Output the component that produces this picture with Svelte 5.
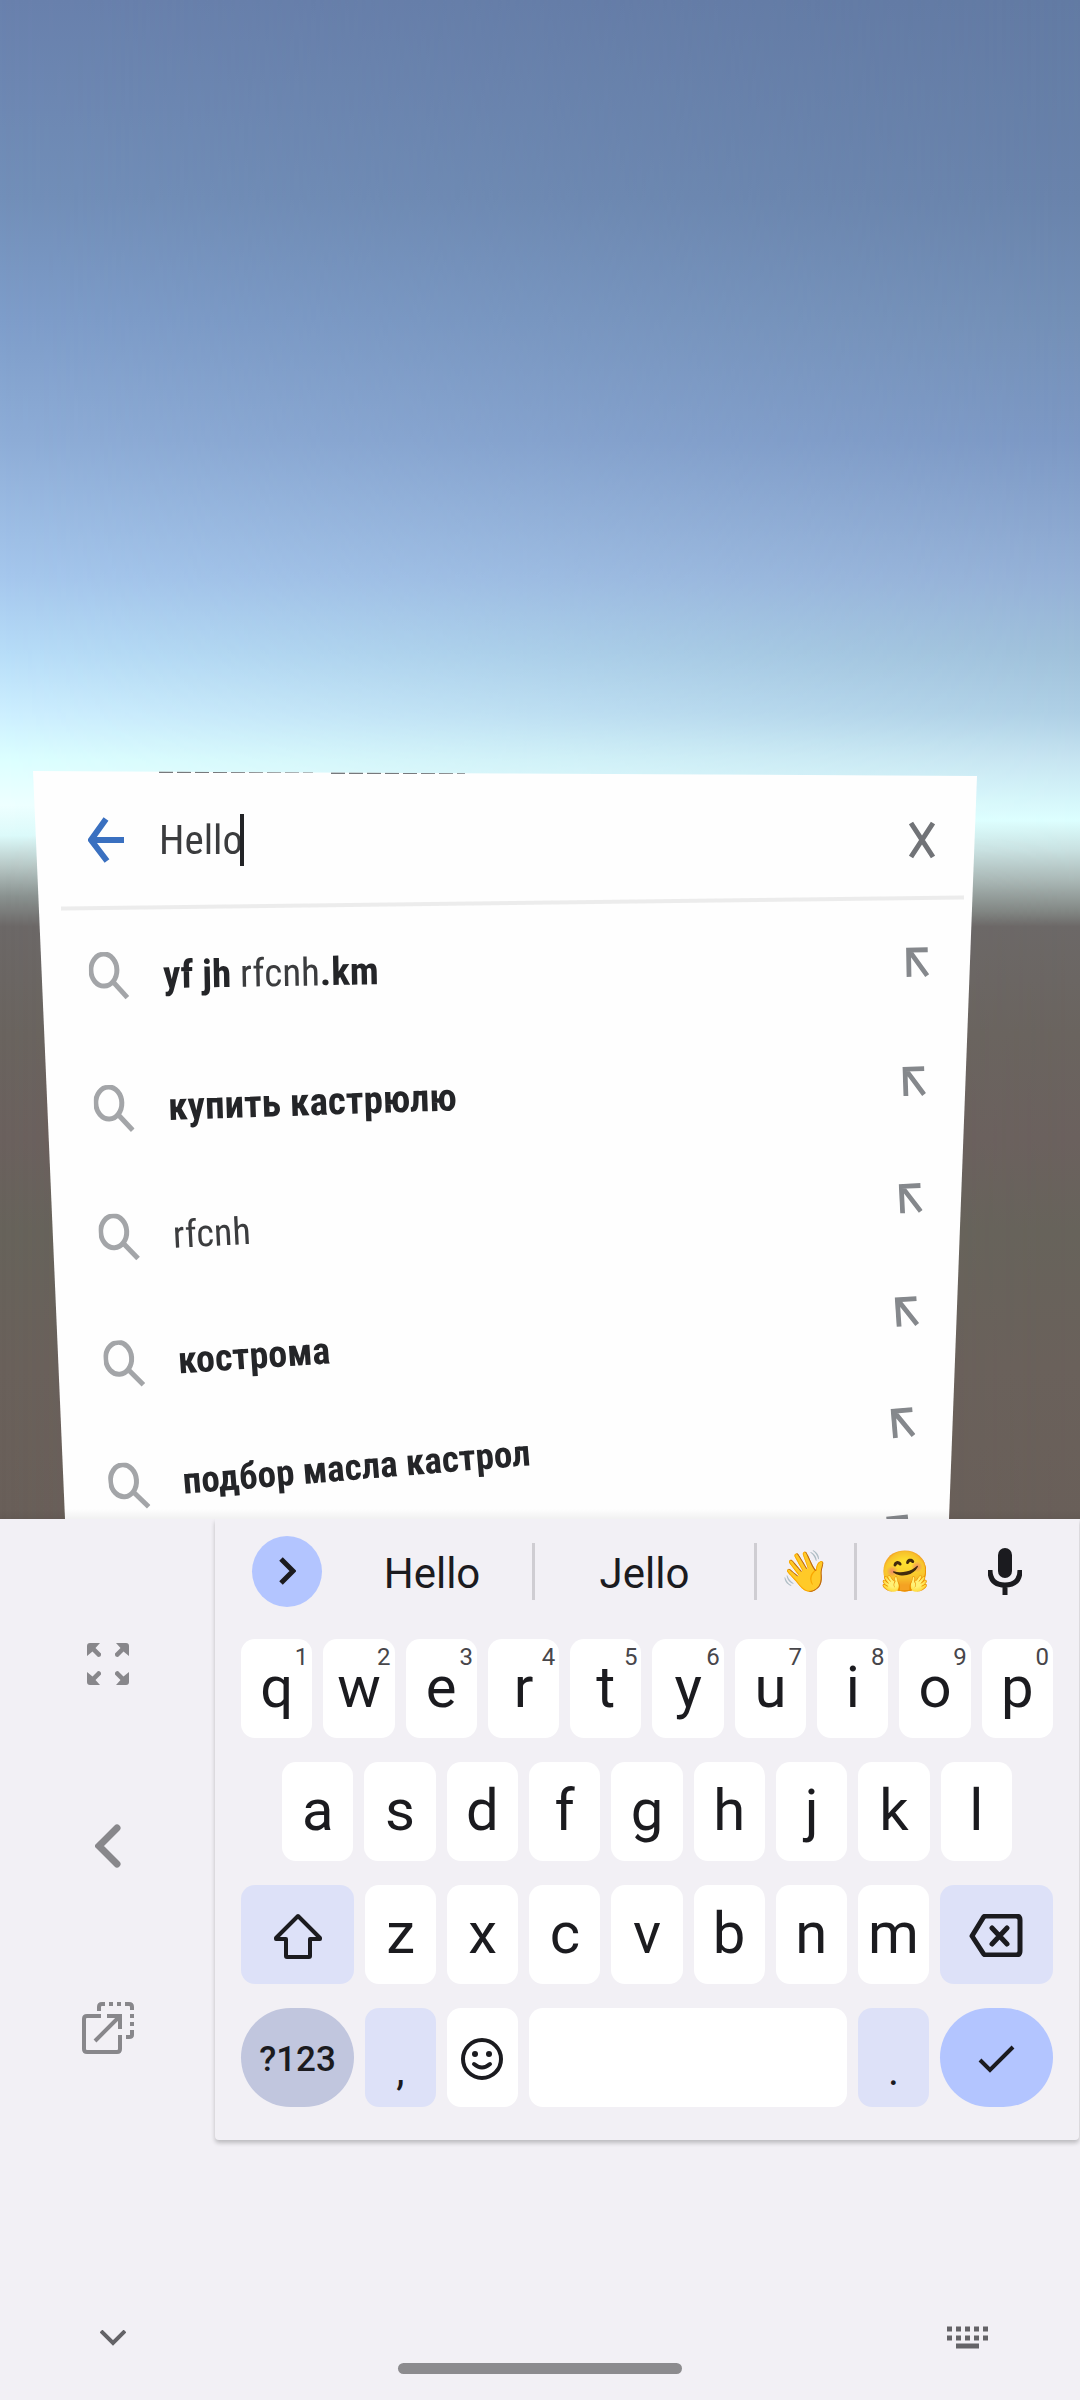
<script>
  let query = $state('Hello');

  // Each suggestion is a list of runs; completed parts are bold, typed parts are regular.
  const suggestions = [
    [{ t: 'yf jh ', b: true }, { t: 'rfcnh', b: false }, { t: '.km', b: true }],
    [{ t: 'купить кастрюлю', b: true }],
    [{ t: 'rfcnh', b: false }],
    [{ t: 'кострома', b: true }],
    [{ t: 'подбор масла кастрол', b: true }],
    []
  ];

  // The board leans away from the viewer, so rows shrink, tilt and move inwards.
  const rowStyle = (i) =>
    `height:${134 - 3 * i}px; padding-left:${56 + 5 * i}px; padding-right:${48 + 3 * i}px; font-size:${39 - Math.floor(i / 2)}px; transform:rotate(${-1 - 0.93 * i}deg)`;

  const top = 'qwertyuiop'.split('');
  const hints = '1234567890';
  const home = 'asdfghjkl'.split('');
  const low = 'zxcvbnm'.split('');
</script>

<main class="screen">
  <section class="scene">
    <div class="board">
      <svg class="cut" viewBox="0 0 310 4" aria-hidden="true">
        <path d="M0 1H154M172 2H306" />
      </svg>
      <header class="search">
        <button class="plain" aria-label="Back">
          <svg class="back" viewBox="0 0 36 46"><path d="M18 2L3 23L19 44M4 23H36" /></svg>
        </button>
        <label class="field">
          <input type="text" aria-label="Search" bind:value={query} />
          <span class="caret"></span>
        </label>
        <button class="plain" aria-label="Clear">
          <svg class="clear" viewBox="0 0 26 38"><path d="M2 2L24 36M24 2L2 36" /></svg>
        </button>
      </header>
      <div class="rule"></div>
      <ul class="list">
        {#each suggestions as runs, i}
          <li style={rowStyle(i)}>
            <svg class="lens" viewBox="0 0 40 48">
              <ellipse cx="15" cy="18" rx="13" ry="16" /><path d="M24 30L38 46" />
            </svg>
            <span class="words">
              {#each runs as r}{#if r.b}<b>{r.t}</b>{:else}{r.t}{/if}{/each}
            </span>
            <button class="plain" aria-label="Use suggestion">
              <svg class="fill" viewBox="0 0 24 32"><path d="M23 3H3V31M4 4L22 30" /></svg>
            </button>
          </li>
        {/each}
      </ul>
    </div>
  </section>

  <section class="ime">
    <div class="deck">
      <nav class="rail">
        <button class="plain" aria-label="Full size">
          <svg width="42" height="42" viewBox="0 0 42 42" fill="#88878b">
            <g id="corner"><path d="M3 0H13L8.500 5L14 10.500Q14.500 14 11 14L5.500 8.500L0 13V3Q0 0 3 0Z" /></g>
            <use href="#corner" transform="translate(42 0) scale(-1 1)" />
            <use href="#corner" transform="translate(0 42) scale(1 -1)" />
            <use href="#corner" transform="translate(42 42) scale(-1 -1)" />
          </svg>
        </button>
        <button class="plain" aria-label="Move to the left">
          <svg width="26" height="44" viewBox="0 0 26 44" fill="none" stroke="#88878b" stroke-width="7" stroke-linecap="round"><path d="M22 4L4 22L22 40" /></svg>
        </button>
        <button class="plain" aria-label="Float keyboard">
          <svg width="52" height="52" viewBox="0 0 52 52" fill="none" stroke="#88878b" stroke-width="4">
            <path d="M19 14H5Q2 14 2 17V47Q2 50 5 50H35Q38 50 38 47V33M25 14H38V27M38 14L13 39" />
            <path d="M17 9V5Q17 2 20 2H23M27 2H31M35 2H39M43 2H47Q50 2 50 5V8M50 12V16M50 20V24M50 28V33Q50 35 47 35H44" />
          </svg>
        </button>
      </nav>

      <div class="keyboard">
        <div class="strip">
          <button class="more" aria-label="More">
            <svg width="17" height="28" viewBox="0 0 17 28" fill="none" stroke="#1b1b1f" stroke-width="5"><path d="M2 2L14 14L2 26" /></svg>
          </button>
          <button class="word">Hello</button>
          <button class="word sep">Jello</button>
          <button class="emoji sep">👋</button>
          <button class="emoji sep">🤗</button>
          <button class="plain" aria-label="Voice input">
            <svg width="34" height="47" viewBox="0 0 34 47">
              <rect x="10" y="0" width="14" height="30" rx="7" fill="#1b1b1f" />
              <path d="M2 22Q2 37 17 37Q32 37 32 22M17 37V47" fill="none" stroke="#1b1b1f" stroke-width="5" />
            </svg>
          </button>
        </div>
        <div class="rows">
          <div class="keys">
            {#each top as k, i}
              <button class="key">{k}<span class="hint">{hints[i]}</span></button>
            {/each}
          </div>
          <div class="keys inset">
            {#each home as k}<button class="key">{k}</button>{/each}
          </div>
          <div class="keys">
            <button class="key wide tint icon" aria-label="Shift">
              <svg width="48" height="46" viewBox="0 0 48 46" fill="none" stroke="#1b1b1f" stroke-width="4" stroke-linejoin="round"><path d="M24 3L2 25V26H12V43Q12 44 13 44H35Q36 44 36 43V26H46V25Z" /></svg>
            </button>
            {#each low as k}<button class="key">{k}</button>{/each}
            <button class="key wide tint icon" aria-label="Backspace">
              <svg width="54" height="43" viewBox="0 0 54 43" fill="none" stroke="#1b1b1f" stroke-width="4" stroke-linejoin="round" stroke-linecap="round"><path stroke-width="5" d="M17 2H47Q51 2 51 6V37Q51 41 47 41H17Q15 41 14 39L3 22L14 4Q15 2 17 2M23 14L38 30M38 14L23 30" /></svg>
            </button>
          </div>
          <div class="keys">
            <button class="key wide pill mode">?123</button>
            <button class="key tint mark">,</button>
            <button class="key icon" aria-label="Emoji">
              <svg width="43" height="43" viewBox="0 0 43 43" fill="none" stroke="#1b1b1f" stroke-width="4" stroke-linecap="round">
                <circle cx="21" cy="22" r="19" /><path d="M13 27Q21 34 29 27" stroke-width="4" />
                <g fill="#1b1b1f" stroke="none"><circle cx="14" cy="17" r="3" /><circle cx="28" cy="17" r="3" /></g>
              </svg>
            </button>
            <button class="key space" aria-label="Space"></button>
            <button class="key tint mark">.</button>
            <button class="key wide pill enter icon" aria-label="Done">
              <svg width="37" height="28" viewBox="0 0 37 28" fill="none" stroke="#1b1b1f" stroke-width="4"><path d="M2 15L12 25L35 2" /></svg>
            </button>
          </div>
        </div>
      </div>
    </div>

    <footer>
      <div class="nav">
        <button class="plain" aria-label="Hide keyboard">
          <svg width="26" height="16" viewBox="0 0 26 16" fill="none" stroke="#646367" stroke-width="4"><path d="M1 1L13 13L25 1" /></svg>
        </button>
        <button class="plain" aria-label="Switch keyboard">
          <svg width="41" height="23" viewBox="0 0 41 23" fill="none" stroke="#646367">
            <path stroke-width="5" stroke-dasharray="5 4" d="M0 3H41M0 12H41" /><path stroke-width="5" d="M9 20H32" />
          </svg>
        </button>
      </div>
      <div class="home"></div>
    </footer>
  </section>
</main>

<style>
  :global(body) { margin: 0; }
  * { box-sizing: border-box; }
  button {
    display: flex;
    align-items: center;
    justify-content: center;
    margin: 0;
    padding: 0;
    border: 0;
    background: none;
    color: #1b1b1f;
    font-family: Roboto, sans-serif;
  }
  svg { display: block; flex: none; }

  .screen {
    display: flex;
    flex-direction: column;
    min-height: 100vh;
    background: #f2f0f5;
    font-family: Roboto, sans-serif;
  }

  .scene {
    position: relative;
    isolation: isolate;
    flex: 1;
    display: flex;
    flex-direction: column;
    justify-content: flex-end;
    padding: 0 103px 0 33px;
    background: linear-gradient(
      #6981ad 0, #728fb9 13%, #7e9dca 21%, #8eadd7 29%, #a5c7ed 38%, #b7ddf8 43%, #cdefff 47%,
      #dcffff 50%, #eeffff 53%, #dcfafa 55%, #b8c8c6 57%, #8a9290 59%, #6c6867 61%,
      #6a645f 68%, #6b615e 75%, #67635b 81%, #6a615b 90%, #695f59 100%
    );
  }
  .scene::before {
    content: '';
    position: absolute;
    inset: 0;
    z-index: -1;
    background: linear-gradient(
      #627aa3 0, #6983ab 13%, #738fb6 21%, #7c98c4 29%, #94b0d6 38%, #9fc0da 43%, #aecfe5 47%,
      #c6e4f1 50%, #dcffff 54%, #c8e0e0 56%, #a9b7b5 58%, #828784 60%, #6c6867 61%,
      #6a645f 68%, #6b615e 75%, #67635b 81%, #6a615b 90%, #695f59 100%
    );
    mask-image: linear-gradient(to right, transparent, #000);
  }
  .scene::after {
    content: '';
    position: absolute;
    inset: auto 0 0 0;
    height: 10px;
    background: linear-gradient(transparent, #0000000d);
  }

  .board {
    background: #fefefe;
    clip-path: polygon(0 0, 100% 5px, calc(100% - 28px) 100%, 32px 100%);
  }
  /* The board is a texture seen at an angle, so its content is slightly soft. */
  .search, .rule, .list, .cut { filter: blur(0.7px); }
  .cut {
    width: 310px;
    height: 4px;
    margin-left: 126px;
    fill: none;
    stroke: #77797c;
    stroke-width: 2;
    stroke-dasharray: 14 4;
  }
  .search {
    display: flex;
    align-items: center;
    height: 130px;
    padding: 0 42px 0 55px;
  }
  .back { width: 36px; height: 46px; fill: none; stroke: #3a70c0; stroke-width: 6; }
  .clear { width: 26px; height: 38px; fill: none; stroke: #717377; stroke-width: 5; }
  .field { position: relative; flex: 1; margin-left: 35px; }
  .field input {
    width: 100%;
    padding: 0;
    border: 0;
    outline: 0;
    background: none;
    color: #3b3c3e;
    font: 41px/52px 'Roboto Condensed', 'Liberation Sans Narrow', Roboto, sans-serif;
  }
  .caret {
    position: absolute;
    left: 81px;
    top: 0;
    width: 4px;
    height: 52px;
    background: #222326;
  }
  .rule {
    height: 4px;
    margin: -4px 13px 4px 28px;
    background: #ececec;
    transform: rotate(-0.7deg);
  }
  .list {
    height: 610px;
    margin: 0;
    padding: 0;
    overflow: hidden;
    list-style: none;
  }
  .list li { display: flex; align-items: center; transform-origin: 76px center; }
  .lens { width: 40px; height: 48px; fill: none; stroke: #a3a5a8; stroke-width: 5; }
  .fill { width: 23px; height: 31px; fill: none; stroke: #85888c; stroke-width: 5; }
  .words {
    flex: 1;
    margin-left: 34px;
    white-space: pre;
    color: #3b3c3e;
    font-family: 'Roboto Condensed', 'Liberation Sans Narrow', Roboto, sans-serif;
    line-height: 48px;
  }
  .words b { color: #242528; }

  .deck { display: flex; }
  .rail { display: flex; flex-direction: column; width: 215px; padding-top: 54px; }
  .rail button { height: 182px; }

  .keyboard {
    flex: 1;
    margin-right: 1px;
    border-radius: 0 0 4px 4px;
    background: #f2f0f5;
    box-shadow: 0 3px 4px #00000038;
    clip-path: inset(0 -4px -10px -4px);
  }
  .strip {
    display: grid;
    grid-template-columns: 80px 200fr 222fr 100px 100px 102px;
    align-items: center;
    height: 104px;
    padding: 0 23px 0 37px;
  }
  .more { width: 70px; height: 71px; border-radius: 50%; background: #b3c5ff; }
  .word { padding-top: 4px; font-size: 42px; line-height: 53px; }
  .emoji { font-size: 40px; line-height: 57px; font-family: 'Noto Color Emoji', sans-serif; }
  .sep { border-left: 3px solid #cfcdd2; }
  .rows { display: flex; flex-direction: column; gap: 24px; padding: 16px 26px 33px; }
  .keys { display: flex; gap: 11px; }
  .inset { padding: 0 41px; }
  .key {
    position: relative;
    flex: 1 1 0;
    min-width: 0;
    height: 99px;
    padding-bottom: 4px;
    border-radius: 14px;
    background: #fff;
    font-size: 58px;
    line-height: 68px;
  }
  .hint {
    position: absolute;
    top: 4px;
    right: 4px;
    color: #47464a;
    font-size: 24px;
    line-height: 28px;
  }
  .icon { padding: 2px 0 0; }
  .wide { flex: 0 0 113px; }
  .tint { background: #dde1f8; }
  .pill { border-radius: 50px; }
  .mode { padding: 4px 0 0; background: #c1c6de; font-size: 35px; font-weight: 500; }
  .enter { background: #b3c5ff; }
  .mark { align-items: flex-end; padding-bottom: 12px; font-size: 42px; line-height: 48px; }
  .space { flex: 0 0 318px; }

  footer {
    display: flex;
    flex-direction: column;
    align-items: center;
    gap: 6px;
    padding: 178px 0 26px;
  }
  .nav { display: flex; justify-content: space-between; align-self: stretch; padding: 0 92px 0 100px; height: 39px; }
  .home { width: 284px; height: 11px; border-radius: 6px; background: #8c8b8e; }
</style>
